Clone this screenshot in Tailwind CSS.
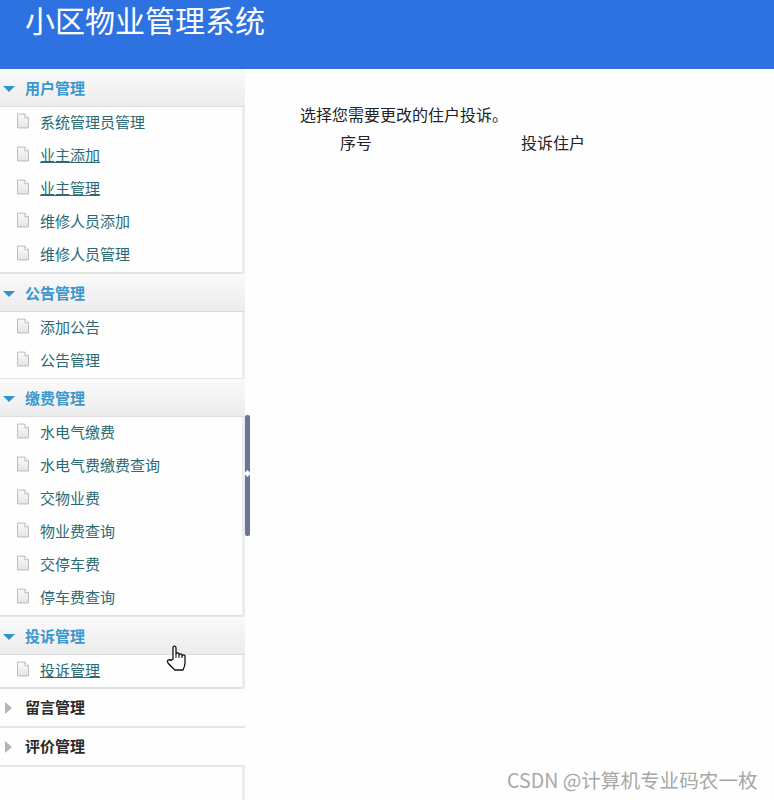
<!DOCTYPE html>
<html lang="zh-CN">
<head>
  <meta charset="UTF-8" />
  <title>小区物业管理系统</title>
  <script src="https://cdn.jsdelivr.net/npm/@tailwindcss/browser@4"></script>
</head>
<body class="relative h-[800px] w-[774px] overflow-hidden bg-[#fefefe] font-['Noto_Sans_CJK_SC','Noto_Sans',sans-serif] text-[15px] text-[#222]">

  <svg width="0" height="0" class="absolute">
    <defs>
      <linearGradient id="paper" x1="0" y1="0" x2="0" y2="1">
        <stop offset="0" stop-color="#fafafa" />
        <stop offset="1" stop-color="#e4e4e4" />
      </linearGradient>
      <symbol id="file" viewBox="0 0 13 16">
        <path d="M.5.5h8l4 4v11H.5z" fill="url(#paper)" stroke="#b4b6b8" />
        <path d="M8.500.5v4h4" fill="#fff" stroke="#b4b6b8" />
      </symbol>
    </defs>
  </svg>

  <header class="h-[69px] bg-[#2e72e2] pl-[25px] text-[30px] leading-[38px] text-white">小区物业管理系统</header>

  <div class="flex">
    <aside class="h-[731px] w-[245px] border-r-[3px] border-[#ececec]">

      <!-- 用户管理 -->
      <div class="-mr-[3px] flex h-[38px] items-center gap-[10px] border-b border-[#dcdcdc] bg-gradient-to-b from-[#fafafa] to-[#ececec] pl-[3px] pt-[2px] font-bold text-[#3a97cf]">
        <span class="h-0 w-0 border-x-[6px] border-t-[6px] border-x-transparent border-t-[#2f93cb]"></span>用户管理
      </div>
      <ul class="border-b-2 border-[#e2e2e2] text-[#2b6a72]">
        <li class="flex h-[33px] items-center gap-[11px] pb-[2px] pl-[17px]"><svg class="mb-[3px] h-4 w-3"><use href="#file" /></svg>系统管理员管理</li>
        <li class="flex h-[33px] items-center gap-[11px] pb-[2px] pl-[17px]"><svg class="mb-[3px] h-4 w-3"><use href="#file" /></svg><span class="underline">业主添加</span></li>
        <li class="flex h-[33px] items-center gap-[11px] pb-[2px] pl-[17px]"><svg class="mb-[3px] h-4 w-3"><use href="#file" /></svg><span class="underline">业主管理</span></li>
        <li class="flex h-[33px] items-center gap-[11px] pb-[2px] pl-[17px]"><svg class="mb-[3px] h-4 w-3"><use href="#file" /></svg>维修人员添加</li>
        <li class="flex h-[33px] items-center gap-[11px] pb-[2px] pl-[17px]"><svg class="mb-[3px] h-4 w-3"><use href="#file" /></svg>维修人员管理</li>
      </ul>

      <!-- 公告管理 -->
      <div class="-mr-[3px] flex h-[38px] items-center gap-[10px] border-b border-[#dcdcdc] bg-gradient-to-b from-[#fafafa] to-[#ececec] pl-[3px] pt-[2px] font-bold text-[#3a97cf]">
        <span class="h-0 w-0 border-x-[6px] border-t-[6px] border-x-transparent border-t-[#2f93cb]"></span>公告管理
      </div>
      <ul class="border-b border-[#e2e2e2] text-[#2b6a72]">
        <li class="flex h-[33px] items-center gap-[11px] pb-[2px] pl-[17px]"><svg class="mb-[3px] h-4 w-3"><use href="#file" /></svg>添加公告</li>
        <li class="flex h-[33px] items-center gap-[11px] pb-[2px] pl-[17px]"><svg class="mb-[3px] h-4 w-3"><use href="#file" /></svg>公告管理</li>
      </ul>

      <!-- 缴费管理 -->
      <div class="-mr-[3px] flex h-[38px] items-center gap-[10px] border-b border-[#dcdcdc] bg-gradient-to-b from-[#fafafa] to-[#ececec] pl-[3px] pt-[2px] font-bold text-[#3a97cf]">
        <span class="h-0 w-0 border-x-[6px] border-t-[6px] border-x-transparent border-t-[#2f93cb]"></span>缴费管理
      </div>
      <ul class="border-b-2 border-[#e2e2e2] text-[#2b6a72]">
        <li class="flex h-[33px] items-center gap-[11px] pb-[2px] pl-[17px]"><svg class="mb-[3px] h-4 w-3"><use href="#file" /></svg>水电气缴费</li>
        <li class="flex h-[33px] items-center gap-[11px] pb-[2px] pl-[17px]"><svg class="mb-[3px] h-4 w-3"><use href="#file" /></svg>水电气费缴费查询</li>
        <li class="flex h-[33px] items-center gap-[11px] pb-[2px] pl-[17px]"><svg class="mb-[3px] h-4 w-3"><use href="#file" /></svg>交物业费</li>
        <li class="flex h-[33px] items-center gap-[11px] pb-[2px] pl-[17px]"><svg class="mb-[3px] h-4 w-3"><use href="#file" /></svg>物业费查询</li>
        <li class="flex h-[33px] items-center gap-[11px] pb-[2px] pl-[17px]"><svg class="mb-[3px] h-4 w-3"><use href="#file" /></svg>交停车费</li>
        <li class="flex h-[33px] items-center gap-[11px] pb-[2px] pl-[17px]"><svg class="mb-[3px] h-4 w-3"><use href="#file" /></svg>停车费查询</li>
      </ul>

      <!-- 投诉管理 -->
      <div class="-mr-[3px] flex h-[38px] items-center gap-[10px] border-b border-[#dcdcdc] bg-gradient-to-b from-[#fafafa] to-[#ececec] pl-[3px] pt-[2px] font-bold text-[#3a97cf]">
        <span class="h-0 w-0 border-x-[6px] border-t-[6px] border-x-transparent border-t-[#2f93cb]"></span>投诉管理
      </div>
      <ul class="border-b-2 border-[#e2e2e2] text-[#2b6a72]">
        <li class="flex h-[32px] items-center gap-[11px] pb-[2px] pl-[17px]"><svg class="mb-[3px] h-4 w-3"><use href="#file" /></svg><span class="underline">投诉管理</span></li>
      </ul>

      <!-- 留言管理 / 评价管理 -->
      <div class="-mr-[3px] flex h-[39px] items-center gap-[13px] border-b-2 border-[#e6e6e6] bg-[#fefefe] pl-[5px] font-bold text-[#2a2a2a]">
        <span class="h-0 w-0 border-y-[6px] border-l-[7px] border-y-transparent border-l-[#b4b4b4]"></span>留言管理
      </div>
      <div class="-mr-[3px] flex h-[39px] items-center gap-[13px] border-b-2 border-[#e6e6e6] bg-[#fefefe] pl-[5px] font-bold text-[#2a2a2a]">
        <span class="h-0 w-0 border-y-[6px] border-l-[7px] border-y-transparent border-l-[#b4b4b4]"></span>评价管理
      </div>
    </aside>

    <main class="pl-[55px] pt-[33px] text-base">
      <p class="leading-[24px]">选择您需要更改的住户投诉。</p>
      <div class="mt-[4px] flex leading-[24px]">
        <span class="ml-[40px] w-[181px]">序号</span>
        <span>投诉住户</span>
      </div>
    </main>
  </div>

  <!-- splitter handle over the sidebar edge -->
  <div class="absolute left-[245px] top-[415px] flex h-[121px] w-[5px] items-center justify-center rounded-[2px] bg-[#6b7599]">
    <span class="-mt-[5px] h-[5px] w-[5px] shrink-0 rotate-45 bg-white"></span>
  </div>

  <!-- mouse cursor -->
  <svg class="absolute left-[166px] top-[645px]" width="22" height="27" viewBox="0 0 22 27">
    <path d="M7 14V3c0-2.500 3-2.500 3 0v6c0-1.500 3-1.500 3 0v1c0-1.500 3-1.500 3 0v1c0-1.500 3-1.500 3 0v7c0 3-1 5-2 7H9c-1-1-7-6-7.500-8-.5-2 2-3 3.500-1.500z" fill="#fff" stroke="#111" stroke-width="1.300" stroke-linejoin="round" />
    <path d="M10 9v4M13 10v3M16 11v2" stroke="#111" fill="none" />
  </svg>

  <div class="absolute left-[507px] top-[766px] text-[19.6px] leading-[28px] text-[#a8a8a8]">CSDN @计算机专业码农一枚</div>
</body>
</html>
